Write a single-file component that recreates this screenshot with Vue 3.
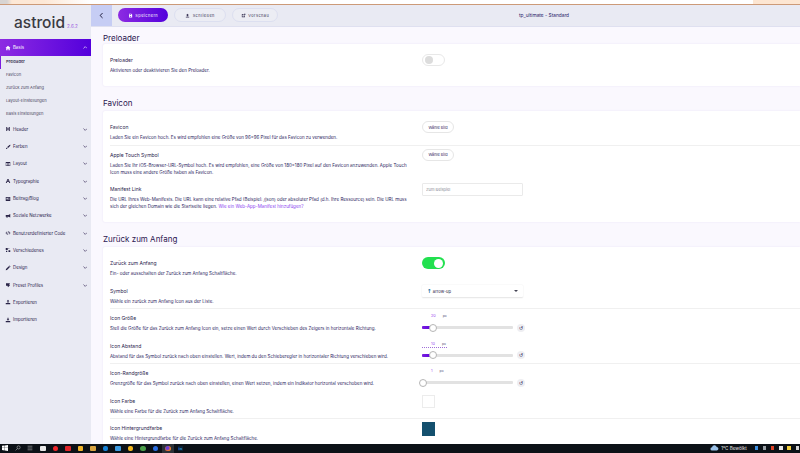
<script setup>
import { ref } from 'vue'

const icons = {
  home: 'M12 3 2 12h3v9h5v-6h4v6h5v-9h3z',
  header: 'M5 4h4v6h6V4h4v16h-4v-6H9v6H5z',
  brush: 'M21 3c-4 1-9 5-12 10l3 3c5-3 9-8 10-12zM7 15c-2 0-3 2-3 5 3 0 6-1 6-3z',
  columns: 'M3 4h18v16H3zM5 8v10h4V8zm6 0v10h2V8zm4 0v10h4V8z',
  font: 'M10 4h4l7 16h-4l-1.5-4h-7L7 20H3zM12 8l-2.3 5h4.6z',
  blog: 'M3 4h18v16H3zM13 7v3h5V7zm0 5v2h5v-2zM6 7v7h5V7z',
  share: 'M21 4v14l-7-3H9l1 5H7l-1-5H3V8h11z',
  code: 'M8 6 2 12l6 6 1.5-1.5L5 12l4.5-4.5zM16 6l6 6-6 6-1.5-1.5L19 12l-4.5-4.5zM13 5l-4 14h2l4-14z',
  misc: 'M3 4h8v8H3zM14 13h7v7h-7zM14 4h3v3h-3zM4 15h5v5H4z',
  pencil: 'M3 21l1-5L15 5l4 4L8 20zM16 4l2-2 4 4-2 2z',
  preset: 'M4 5h16l-3 6 3 2-8 8-2-6H4z',
  exp: 'M12 3l5 6h-3v6h-4V9H7zM3 16h18v5H3z',
  imp: 'M10 3h4v6h3l-5 6-5-6h3zM3 16h18v5H3z',
  save: 'M5 3h11l4 4v14H5zM8 6v4h7V6zm1 8v4h6v-4z',
  up: 'M12 3l7 8h-4v5H9v-5H5zM4 18h16v3H4z',
  ext: 'M4 5h8v3H7v9h9v-5h3v8H4zM14 3h7v7l-3-2-4 4-2-2 4-4z'
}

const menuTop = [
  { label: 'Header', icon: 'header' },
  { label: 'Farben', icon: 'brush' },
  { label: 'Layout', icon: 'columns' },
  { label: 'Typographie', icon: 'font' },
  { label: 'Beitrag/Blog', icon: 'blog' },
  { label: 'Soziale Netzwerke', icon: 'share' },
  { label: 'Benutzerdefinierter Code', icon: 'code' },
  { label: 'Verschiedenes', icon: 'misc' },
  { label: 'Design', icon: 'pencil' },
  { label: 'Preset Profiles', icon: 'preset' },
  { label: 'Exportieren', icon: 'exp', plain: true },
  { label: 'Importieren', icon: 'imp', plain: true }
]
const subMenu = ['Preloader', 'Favicon', 'Zurück zum Anfang', 'Layout-Einstellungen', 'Basis Einstellungen']

const enabled = ref(true)

// taskbar: Farbe der kleinen Programm-Icons
const taskApps = [
  { c: '#e8e8e8', r: '1px' }, { c: '#f0262b', r: '50%' }, { c: '#e0252a', r: '1px' }, { c: '#f0b429', r: '1px' },
  { c: '#d9a441', r: '1px' }, { c: '#1681d6', r: '2px' }, { c: '#3d9be0', r: '1px' }, { c: '#f4b81f', r: '2px' },
  { c: '#4c9f4a', r: '50%' }, { c: '#2a6de0', r: '50%' }
]
const trayApps = ['#3d8ee0', '#9aa0a6', '#e0452a', '#e8e8e8', '#f4d03f', '#d5d5d5']
</script>

<template>
  <div class="screen">
    <div class="browser-strip"></div>
    <div class="page">
      <aside class="sidebar">
        <div class="logo"><span class="logo-text">astroid</span><span class="logo-ver">2.6.2</span></div>
        <div class="menu-item active">
          <svg class="mi" viewBox="0 0 24 24"><path :d="icons.home" /></svg>
          <span class="mlabel">Basis</span>
          <svg class="chev" viewBox="0 0 10 6"><path d="M1 5l4-4 4 4" /></svg>
        </div>
        <div v-for="(s, i) in subMenu" :key="s" class="sub-item" :class="{ current: i === 0 }">{{ s }}</div>
        <div v-for="m in menuTop" :key="m.label" class="menu-item">
          <svg class="mi" viewBox="0 0 24 24"><path fill-rule="evenodd" :d="icons[m.icon]" /></svg>
          <span class="mlabel">{{ m.label }}</span>
          <svg v-if="!m.plain" class="chev" viewBox="0 0 10 6"><path d="M1 1l4 4 4-4" /></svg>
        </div>
      </aside>

      <div class="main">
        <header class="toolbar">
          <button class="back">
            <svg viewBox="0 0 10 10"><path d="M6.5 1.5 3 5l3.5 3.5" /></svg>
          </button>
          <div class="pills">
            <button class="pill primary"><svg viewBox="0 0 24 24"><path fill-rule="evenodd" :d="icons.save" /></svg>Speichern</button>
            <button class="pill wide"><svg viewBox="0 0 24 24"><path :d="icons.up" /></svg>Schließen</button>
            <button class="pill"><svg viewBox="0 0 24 24"><path :d="icons.ext" /></svg>Vorschau</button>
          </div>
          <div class="tpl-name">tp_ultimate - Standard</div>
        </header>

        <div class="content">
          <h2 class="first">Preloader</h2>
          <section class="card">
            <div class="row">
              <div class="txt">
                <label>Preloader</label>
                <p>Aktivieren oder deaktivieren Sie den Preloader.</p>
              </div>
              <div class="ctl"><span class="toggle"><i></i></span></div>
            </div>
          </section>

          <h2>Favicon</h2>
          <section class="card">
            <div class="row line">
              <div class="txt">
                <label>Favicon</label>
                <p>Laden Sie ein Favicon hoch. Es wird empfohlen eine Größe von 96x96 Pixel für das Favicon zu verwenden.</p>
              </div>
              <div class="ctl"><button class="pick">Wähle Bild</button></div>
            </div>
            <div class="row tall">
              <div class="txt">
                <label>Apple Touch Symbol</label>
                <p>Laden Sie Ihr iOS-Browser-URL-Symbol hoch. Es wird empfohlen, eine Größe von 180x180 Pixel auf den Favicon anzuwenden. Apple Touch Icon muss eine andere Größe haben als Favicon.</p>
              </div>
              <div class="ctl"><button class="pick">Wähle Bild</button></div>
            </div>
            <div class="row tall">
              <div class="txt">
                <label>Manifest Link</label>
                <p>Die URL Ihres Web-Manifests. Die URL kann eine relative Pfad (Beispiel: /json) oder absoluter Pfad (d.h. Ihre Ressource) sein. Die URL muss sich der gleichen Domain wie die Startseite liegen. <a>Wie ein Web-App-Manifest hinzufügen?</a></p>
              </div>
              <div class="ctl"><input class="field" placeholder="Zum Beispiel" /></div>
            </div>
          </section>

          <h2>Zurück zum Anfang</h2>
          <section class="card">
            <div class="row">
              <div class="txt">
                <label>Zurück zum Anfang</label>
                <p>Ein- oder ausschalten der Zurück zum Anfang Schaltfläche.</p>
              </div>
              <div class="ctl"><span class="toggle on" @click="enabled = !enabled"><i></i></span></div>
            </div>
            <div class="row line">
              <div class="txt">
                <label>Symbol</label>
                <p>Wähle ein zurück zum Anfang Icon aus der Liste.</p>
              </div>
              <div class="ctl">
                <div class="select"><span><b class="arrow">↑</b> arrow-up</span><em></em></div>
              </div>
            </div>
            <div class="row">
              <div class="txt">
                <label>Icon Größe</label>
                <p>Stell die Größe für das Zurück zum Anfang Icon ein, setze einen Wert durch Verschieben des Zeigers in horizontale Richtung.</p>
              </div>
              <div class="ctl slider-ctl">
                <div class="val"><span>20</span><small>px</small></div>
                <div class="slider">
                  <div class="track"><div class="fill" :style="{ width: '10px' }"></div><i></i></div>
                  <span class="reset">↺</span>
                </div>
              </div>
            </div>
            <div class="row line">
              <div class="txt">
                <label>Icon Abstand</label>
                <p>Abstand für das Symbol zurück nach oben einstellen. Wert, indem du den Schieberegler in horizontaler Richtung verschieben wird.</p>
              </div>
              <div class="ctl slider-ctl">
                <div class="val dotted"><span>10</span><small>px</small></div>
                <div class="slider">
                  <div class="track"><div class="fill" :style="{ width: '10px' }"></div><i></i></div>
                  <span class="reset">↺</span>
                </div>
              </div>
            </div>
            <div class="row">
              <div class="txt">
                <label>Icon-Randgröße</label>
                <p>Grenzgröße für das Symbol zurück nach oben einstellen, einen Wert setzen, indem ein Indikator horizontal verschoben wird.</p>
              </div>
              <div class="ctl slider-ctl">
                <div class="val"><span>1</span><small>px</small></div>
                <div class="slider">
                  <div class="track"><div class="fill" :style="{ width: '0px' }"></div><i></i></div>
                  <span class="reset">↺</span>
                </div>
              </div>
            </div>
            <div class="row line">
              <div class="txt">
                <label>Icon Farbe</label>
                <p>Wähle eine Farbe für die Zurück zum Anfang Schaltfläche.</p>
              </div>
              <div class="ctl"><span class="swatch white"></span></div>
            </div>
            <div class="row">
              <div class="txt">
                <label>Icon Hintergrundfarbe</label>
                <p>Wähle eine Hintergrundfarbe für die Zurück zum Anfang Schaltfläche.</p>
              </div>
              <div class="ctl"><span class="swatch teal"></span></div>
            </div>
          </section>
        </div>
      </div>
    </div>

    <footer class="taskbar">
      <svg class="win" viewBox="0 0 10 10"><path d="M0 1.4 4.3.8v3.9H0zM4.8.7 10 0v4.7H4.8zM0 5.2h4.3v3.9L0 8.5zM4.8 5.2H10V10l-5.2-.7z" /></svg>
      <svg class="sys" viewBox="0 0 10 10"><circle cx="6" cy="4" r="2.6" /><path d="M4 6 1 9" /></svg>
      <svg class="sys" viewBox="0 0 10 10"><path d="M1 2h8M1 5h8M1 8h8" /></svg>
      <span v-for="(a, i) in taskApps" :key="i" class="app"><i :style="{ background: a.c, borderRadius: a.r }"></i></span>
      <span class="app fox"><i></i></span>
      <span class="app"><i class="ps">in</i></span>
      <div class="tray">
        <svg class="cloud" viewBox="0 0 16 10"><path d="M4 9.5a3 3 0 0 1-.4-6A4.4 4.4 0 0 1 12 3a3.3 3.3 0 0 1 .4 6.5z" /></svg>
        <span class="weather">1°C Bewölkt</span>
        <i v-for="(c, i) in trayApps" :key="i" :style="{ background: c }"></i>
      </div>
    </footer>
  </div>
</template>

<style scoped>
.screen {
  width: 800px;
  height: 453px;
  display: flex;
  flex-direction: column;
  overflow: hidden;
  font-family: Inter, "Liberation Sans", sans-serif;
  color: #2a1c4d;
}
.browser-strip {
  height: 4px;
  flex: none;
  border-bottom: 1px solid #cc9a78;
  background: linear-gradient(90deg, #d8d4d2 0, #d8d4d2 7px, #fde8d6 12px, #fde8d6 44px, #fff 90px, #fff 753px, #fde6d2 753px);
}
.page {
  flex: 1;
  min-height: 0;
  display: flex;
}

/* Sidebar */
.sidebar {
  width: 91px;
  flex: none;
  background: #e9eaf3;
}
.logo {
  height: 34px;
  display: flex;
  align-items: center;
  padding: 0 0 0 14px;
  box-sizing: border-box;
}
.logo-text {
  font-family: Inter, sans-serif;
  font-size: 15.5px;
  font-weight: 500;
  color: #3a3a42;
}
.logo-ver {
  font-size: 4.6px;
  color: #9a5ae0;
  margin: 9px 0 0 2px;
}
.menu-item {
  height: 17.3px;
  display: flex;
  align-items: center;
  padding: 0 4px 0 5px;
}
.menu-item.active {
  background: linear-gradient(90deg, #8d2be2, #5300dc);
  color: #fff;
}
.mi {
  width: 6px;
  height: 6px;
  fill: #2a2447;
  flex: none;
}
.active .mi {
  fill: #fff;
}
.mlabel {
  flex: 1;
  margin-left: 2px;
  font-size: 4.4px;
  white-space: nowrap;
}
.chev {
  width: 4.5px;
  height: 3px;
  fill: none;
  stroke: currentColor;
  stroke-width: 1.4;
  flex: none;
}
.sub-item {
  height: 12.9px;
  line-height: 12.9px;
  padding-left: 6px;
  font-size: 4.1px;
  color: #4a4560;
  white-space: nowrap;
}
.sub-item.current {
  border-left: 1px solid #7b1ee0;
  padding-left: 5px;
  color: #1d1640;
  font-weight: 500;
}

/* Toolbar */
.main {
  flex: 1;
  min-width: 0;
  display: flex;
  flex-direction: column;
  background: #faf8fe;
}
.toolbar {
  height: 20.5px;
  flex: none;
  display: flex;
  align-items: center;
  background: #e9eaf3;
  box-shadow: 0 1px 0 #dfe0f0;
}
.back {
  width: 21px;
  height: 100%;
  border: 0;
  padding: 0;
  background: #c6cdf4;
  display: flex;
  align-items: center;
  justify-content: center;
}
.back svg {
  width: 7px;
  height: 7px;
  fill: none;
  stroke: #1d1a3a;
  stroke-width: 1.4;
}
.pills {
  display: flex;
  gap: 6px;
  margin-left: 6px;
}
.pill {
  width: 46px;
  height: 14px;
  padding: 0;
  border: 1px solid #dcdff0;
  border-radius: 8px;
  background: #ecedf4;
  font: 400 3.9px Inter, sans-serif;
  letter-spacing: 0.45px;
  color: #3a3555;
  display: flex;
  align-items: center;
  justify-content: center;
  gap: 2.5px;
}
.pill.wide {
  width: 52px;
}
.pill.primary {
  width: 50px;
  border: 0;
  color: #fff;
  background: linear-gradient(90deg, #8d2be2, #5300dc);
}
.pill svg {
  width: 5px;
  height: 5px;
  fill: currentColor;
}
.tpl-name {
  flex: 1;
  padding-left: 10px;
  text-align: center;
  font-size: 4.8px;
  color: #2a1c6a;
}

/* Inhalt */
.content {
  flex: 1;
  min-height: 0;
  overflow: hidden;
  padding-left: 12px;
}
h2 {
  margin: 12.5px 0 3px;
  height: 10px;
  line-height: 10px;
  font-size: 8px;
  font-weight: 400;
  color: #2a1650;
}
h2.first {
  margin: 7px 0 1.5px;
}
.card {
  background: #fff;
  border-radius: 2px 0 0 2px;
  padding: 7px 0;
  box-shadow: 0 0 2px #e7e0f5;
}
.row {
  display: grid;
  grid-template-columns: 312px 1fr;
  box-sizing: border-box;
  height: 27.5px;
  margin-left: 7px;
  padding-top: 5px;
}
.row.tall {
  height: 34.5px;
}
.row.line {
  border-bottom: 1px solid #f0f0f0;
}
.txt {
  padding-right: 8px;
}
.txt label {
  display: block;
  height: 8px;
  line-height: 8px;
  font-size: 5px;
  color: #2a1c4d;
}
.txt p {
  margin: 3px 0 0;
  line-height: 7px;
  font-size: 4.5px;
  color: #2b2560;
}
.txt a {
  color: #8a3ff0;
}
.ctl {
  margin-top: -2px;
}

.toggle {
  display: flex;
  align-items: center;
  width: 23px;
  height: 12px;
  box-sizing: border-box;
  border: 0.5px solid #e8e8e8;
  border-radius: 6px;
  padding-left: 2px;
  background: #fff;
}
.toggle i {
  width: 8px;
  height: 8px;
  border-radius: 50%;
  background: #dcdcdc;
}
.toggle.on {
  border: 0;
  background: #22e04f;
  justify-content: flex-end;
  padding: 0 2px 0 0;
}
.toggle.on i {
  width: 9px;
  height: 9px;
  background: #fff;
}
.pick {
  display: block;
  width: 32px;
  height: 12px;
  padding: 0;
  border: 0.5px solid #e6e6e6;
  border-radius: 6px;
  background: #fff;
  font: 400 3.9px Inter, sans-serif;
  color: #33285f;
}
.field {
  display: block;
  width: 101px;
  height: 13px;
  box-sizing: border-box;
  border: 0.5px solid #eaeaea;
  border-radius: 1px;
  padding: 0 3px;
  outline: none;
  font: 4px Inter, sans-serif;
}
.field::placeholder {
  color: #8a8a96;
}
.select {
  width: 101px;
  height: 12px;
  box-sizing: border-box;
  padding: 0 5px;
  display: flex;
  align-items: center;
  justify-content: space-between;
  font-size: 4.2px;
  color: #2a2447;
  border-radius: 1px;
  box-shadow: 0 0.5px 1.5px #e4e4e4;
}
.arrow {
  font-family: "DejaVu Sans", sans-serif;
  font-size: 5.5px;
  font-weight: 700;
  color: #1d6fa0;
}
.select em {
  width: 0;
  height: 0;
  border: 2px solid transparent;
  border-top: 2.5px solid #445;
  border-bottom: 0;
}

.slider-ctl {
  margin-top: -1px;
}
.val {
  display: flex;
  width: 25px;
  height: 7px;
  padding-left: 9px;
  box-sizing: border-box;
  gap: 7px;
  font-size: 3.8px;
  line-height: 6px;
  color: #a050ee;
}
.val small {
  font-size: 3.6px;
  color: #555577;
}
.val.dotted {
  border-bottom: 1px dotted #a070d8;
}
.slider {
  display: flex;
  align-items: center;
  margin-top: 3px;
  height: 9px;
}
.track {
  width: 91px;
  height: 3px;
  background: #e2e2e2;
  border-radius: 1px;
  display: flex;
  align-items: center;
}
.fill {
  height: 3px;
  background: linear-gradient(90deg, #7b1ee0, #5a00dc);
  border-radius: 1px 0 0 1px;
}
.track i {
  flex: none;
  width: 8px;
  height: 8px;
  margin-left: -3px;
  box-sizing: border-box;
  border-radius: 50%;
  background: #fff;
  border: 1px solid #b5b5b5;
}
.fill[style*="width: 0px"] + i {
  margin-left: 0;
}
.reset {
  width: 8px;
  height: 8px;
  margin-left: 4px;
  border-radius: 50%;
  background: #eeeef2;
  font: 5px/8px "DejaVu Sans", sans-serif;
  text-align: center;
  color: #2a2050;
}
.swatch {
  display: block;
  width: 13px;
  height: 13.5px;
  box-sizing: border-box;
}
.swatch.white {
  border: 0.5px solid #ececec;
  background: #fff;
}
.swatch.teal {
  background: #14506e;
}

/* Taskleiste */
.taskbar {
  height: 9.5px;
  flex: none;
  display: flex;
  align-items: center;
  padding-left: 2px;
  background: #0c1117;
}
.win {
  width: 6px;
  height: 6px;
  fill: #fff;
  margin-right: 3.8px;
}
.sys {
  width: 6px;
  height: 6px;
  margin: 0 3.2px;
  fill: none;
  stroke: #d8d8d8;
  stroke-width: 0.8;
}
.app {
  width: 12.5px;
  height: 100%;
  display: flex;
  align-items: center;
  justify-content: center;
}
.app i {
  width: 5.5px;
  height: 5.5px;
  display: block;
}
.app.fox {
  background: #2c3138;
}
.fox i {
  border-radius: 50%;
  background: radial-gradient(circle at 40% 40%, #6b3fd6 30%, #f2752a 60%, #f5b32a);
}
.ps {
  font: 700 4px/5.5px "Liberation Sans", sans-serif;
  text-align: center;
  color: #2f9bea;
  background: #0a2136;
}
.tray {
  margin-left: auto;
  display: flex;
  align-items: center;
  gap: 4.7px;
  padding-right: 1px;
}
.cloud {
  width: 9px;
  height: 6px;
  fill: #9cc2e8;
}
.weather {
  margin: 0 3px 0 -2.7px;
  font-size: 4.6px;
  color: #e6e6e6;
  white-space: nowrap;
}
.tray i {
  width: 3.5px;
  height: 4px;
  display: block;
}
</style>

<style>
html, body {
  margin: 0;
  background: #fff;
}
</style>
